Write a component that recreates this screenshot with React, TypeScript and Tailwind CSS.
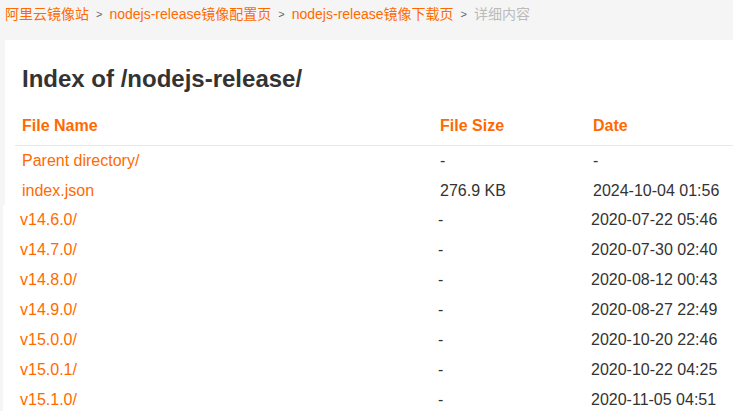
const crumbs = [
  "阿里云镜像站",
  "nodejs-release镜像配置页",
  "nodejs-release镜像下载页",
];

const topRows = [
  { name: "Parent directory/", size: "-", date: "-" },
  { name: "index.json", size: "276.9 KB", date: "2024-10-04 01:56" },
];

const dirRows = [
  { name: "v14.6.0/", size: "-", date: "2020-07-22 05:46" },
  { name: "v14.7.0/", size: "-", date: "2020-07-30 02:40" },
  { name: "v14.8.0/", size: "-", date: "2020-08-12 00:43" },
  { name: "v14.9.0/", size: "-", date: "2020-08-27 22:49" },
  { name: "v15.0.0/", size: "-", date: "2020-10-20 22:46" },
  { name: "v15.0.1/", size: "-", date: "2020-10-22 04:25" },
  { name: "v15.1.0/", size: "-", date: "2020-11-05 04:51" },
];

type Row = { name: string; size: string; date: string };

const FileRow = ({ row }: { row: Row }) => (
  <div className="grid grid-cols-[418px_153px_1fr] h-[30px] leading-[30px] px-[7px] text-[16px]">
    <a className="text-[#ff6a00] whitespace-nowrap">{row.name}</a>
    <span className="text-[#333]">{row.size}</span>
    <span className="text-[#333] whitespace-nowrap">{row.date}</span>
  </div>
);

export default function App() {
  return (
    <div className="w-[733px] h-[411px] overflow-hidden bg-[#f5f5f5] font-['Liberation_Sans','Noto_Sans_CJK_SC',sans-serif]">
      {/* Breadcrumb */}
      <div className="flex items-center h-[29px] pl-[5px] text-[14px] whitespace-nowrap">
        {crumbs.map((c, i) => (
          <div key={i} className="flex items-center">
            <a className="text-[#ff6a00]">{c}</a>
            <span className="text-[#666] text-[11px] px-[7px]">&gt;</span>
          </div>
        ))}
        <span className="text-[#bbb]">详细内容</span>
      </div>

      {/* Card */}
      <div className="mt-[11px] ml-[5px] bg-white pt-[21px]">
        <h1 className="pl-[17px] text-[24px] leading-[36px] font-bold text-[#333]">
          Index of /nodejs-release/
        </h1>
        <div className="ml-[10px] mt-[9px]">
          <div className="grid grid-cols-[418px_153px_1fr] h-[40px] items-center px-[7px] text-[16px] font-bold text-[#ff6a00] border-b border-[#e8e8e8]">
            <span>File Name</span>
            <span>File Size</span>
            <span>Date</span>
          </div>
          {topRows.map((r, i) => (
            <FileRow key={i} row={r} />
          ))}
        </div>
      </div>
      <div className="-mt-[1px] ml-[3px] bg-white pl-[10px]">
        {dirRows.map((r, i) => (
          <FileRow key={i} row={r} />
        ))}
      </div>
    </div>
  );
}
